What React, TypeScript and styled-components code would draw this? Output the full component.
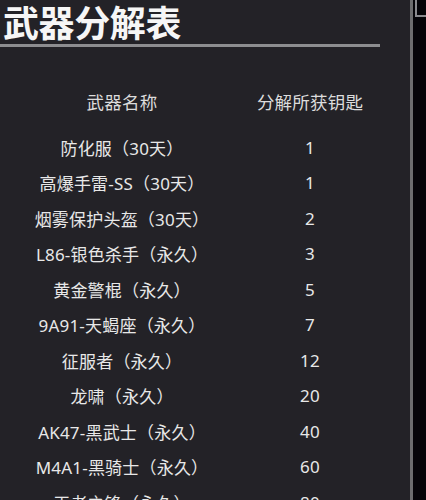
import React from 'react';
import styled, { createGlobalStyle } from 'styled-components';

const GlobalStyle = createGlobalStyle`
  html, body {
    margin: 0;
    padding: 0;
    background: #050408;
  }
  body {
    font-family: "Noto Sans", "Noto Sans CJK SC", sans-serif;
  }
`;

const Page = styled.div`
  display: flex;
  width: 426px;
  height: 500px;
  overflow: hidden;
`;

const Panel = styled.main`
  width: 410px;
  flex: none;
  background: #232227;
  border-right: 3px solid #6c6c6e;
  box-sizing: content-box;
`;

const Side = styled.aside`
  flex: 1;
  background: #050408;
  padding-left: 2px;
`;

const Corner = styled.div`
  width: 100%;
  height: 15px;
  border-left: 2px solid #8a8a8e;
  border-bottom: 2px solid #8a8a8e;
`;

const Title = styled.h1`
  margin: 0;
  padding: 0 0 0 3px;
  height: 44px;
  font-family: "Noto Sans CJK SC", sans-serif;
  font-size: 36px;
  line-height: 42px;
  font-weight: 700;
  color: #f6f6f6;
  letter-spacing: -0.4px;
`;

const Rule = styled.div`
  width: 380px;
  height: 3px;
  background: #8d8d90;
`;

const Table = styled.div`
  display: grid;
  grid-template-columns: 244px 132px;
  grid-template-rows: 40.5px;
  grid-auto-rows: 35.5px;
  margin-top: 42px;
`;

const Cell = styled.div<{ $head?: boolean }>`
  display: flex;
  align-items: center;
  justify-content: center;
  white-space: nowrap;
  letter-spacing: 0.2px;
  font-size: ${({ $head }) => ($head ? '17.5px' : '17px')};
  color: ${({ $head }) => ($head ? '#dcdcdc' : '#e8e8e8')};
  margin-bottom: ${({ $head }) => ($head ? '15.5px' : '0')};
`;

const rows: [string, number][] = [
  ['防化服（30天）', 1],
  ['高爆手雷-SS（30天）', 1],
  ['烟雾保护头盔（30天）', 2],
  ['L86-银色杀手（永久）', 3],
  ['黄金警棍（永久）', 5],
  ['9A91-天蝎座（永久）', 7],
  ['征服者（永久）', 12],
  ['龙啸（永久）', 20],
  ['AK47-黑武士（永久）', 40],
  ['M4A1-黑骑士（永久）', 60],
  ['王者之锋（永久）', 80],
];

const App: React.FC = () => (
  <>
    <GlobalStyle />
    <Page>
      <Panel>
        <Title>武器分解表</Title>
        <Rule />
        <Table>
          <Cell $head>武器名称</Cell>
          <Cell $head>分解所获钥匙</Cell>
          {rows.map(([name, keys]) => (
            <React.Fragment key={name}>
              <Cell>{name}</Cell>
              <Cell>{keys}</Cell>
            </React.Fragment>
          ))}
        </Table>
      </Panel>
      <Side>
        <Corner />
      </Side>
    </Page>
  </>
);

export default App;
